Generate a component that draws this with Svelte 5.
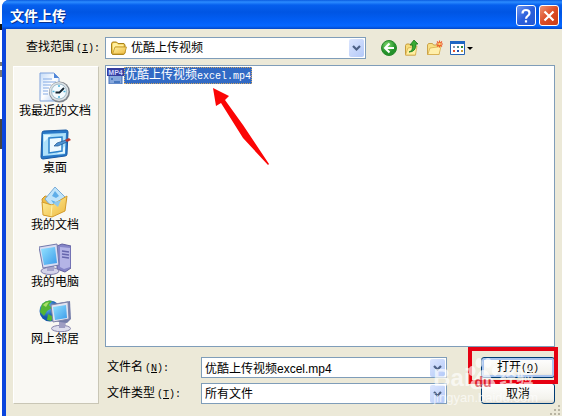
<script lang="ts">
	const folder = '优酷上传视频';
	const places = [
		{ id: 'recent', label: '我最近的文档' },
		{ id: 'desktop', label: '桌面' },
		{ id: 'documents', label: '我的文档' },
		{ id: 'computer', label: '我的电脑' },
		{ id: 'network', label: '网上邻居' }
	];

	let fileName = $state('优酷上传视频excel.mp4');
</script>

{#snippet chevron()}
	<svg class="chevron" viewBox="0 0 15 18" width="15" height="18" aria-hidden="true">
		<path d="M4 7l3.500 3.500L11 7" fill="none" stroke="#4d6185" stroke-width="2.200" />
	</svg>
{/snippet}

{#snippet placeIcon(id: string)}
	<svg viewBox="0 0 32 32" width="32" height="32" aria-hidden="true">
		{#if id === 'recent'}
			<path d="M1 1h14l5 5v23H1z" fill="url(#paper)" stroke="#7fa3dc" />
			<path d="M15 1v5h5z" fill="#4f86d8" />
			<path d="M4 7h9M4 10h13M4 13h8M4 16h6M4 19h5M4 22h5" stroke="#82a9e4" />
			<circle cx="20.500" cy="20" r="10.500" fill="#7f858c" />
			<circle cx="20" cy="19.500" r="9.500" fill="#dce1e4" />
			<circle cx="20" cy="19.500" r="7.500" fill="#f4fbff" stroke="#9fb9c8" />
			<path d="M20 13v2M20 24v2M13.500 19.500h2M24.500 19.500h2" stroke="#4ab0d8" stroke-width="1.500" />
			<path d="M16.500 20.500h4l4.500-4.500" fill="none" stroke="#14242f" stroke-width="1.800" />
		{:else if id === 'desktop'}
			<path d="M3 4q0-2 2-2l22-1q2 0 2 2l-1 22q0 2-2 2L4 30q-2 0-2-2z" fill="#2777c6" stroke="#1659a4" />
			<path d="M4 5l23-1-1 21-22 2z" fill="#aee1fa" />
			<path d="M5 6h7l-7 7zM26 17v7l-8 1z" fill="#e3f7ff" />
			<path d="M10 9l13-1v14l-13 2z" fill="#eefaff" stroke="#2d83cb" stroke-width="1.500" />
			<path d="M15 17l3-3 9-3 1 2-9 4z" fill="#4d93d4" stroke="#24588e" stroke-width=".7" />
			<path d="M26 11l4-2 2 2-4 2z" fill="#b8372e" />
		{:else if id === 'documents'}
			<path d="M3 13l3-3 5 1 5 6-3 13-8-1z" fill="#f0bd45" stroke="#c9932e" />
			<path d="M16 1l12 12-11 13L6 13z" fill="#bfe4fa" stroke="#79acd8" />
			<path d="M16 5l4 5-3 2-4-2zM12 14l5 2 5-2-5 7z" fill="#5eaee9" />
			<path d="M3 16l10 3 15-9-2 15-13 6-9-2z" fill="url(#folderFill)" stroke="#d39b2b" />
			<path d="M13 19l-1 11" stroke="#fff3ac" />
			<path d="M14 17l5 4 3-7z" fill="#8fc9ed" />
		{:else if id === 'computer'}
			<path d="M18 3l5-2 9 2v22l-6 4-8-3z" fill="#8585c8" stroke="#6260a0" />
			<path d="M21 4l10 1v19l-6 2-4-2z" fill="#b4b4e6" />
			<path d="M23 8l7 1M23 11l7 1M23 14l7 1" stroke="#6667ae" stroke-width="1.300" />
			<ellipse cx="11" cy="28" rx="9" ry="3.500" fill="#d4d3ea" stroke="#8280ad" />
			<path d="M8 22h7v6H8z" fill="#a6a5cc" />
			<path d="M0 4l18-3 2 21-16 3z" fill="#d7dcf2" stroke="#7378ab" />
			<path d="M2 6l14-2 2 16-13 2z" fill="url(#screen)" />
		{:else}
			<circle cx="11" cy="11" r="10.500" fill="url(#globe)" />
			<path d="M3 4q5-5 10-3l-3 4 3 3-5 3-3 5-4-4zM9 14l6 3-3 4-4-1z" fill="#53b535" />
			<path d="M4 5q3-3 6-3l-3 5z" fill="#abe06a" />
			<ellipse cx="22" cy="28.500" rx="9.500" ry="3.200" fill="#dedeed" stroke="#8582aa" />
			<path d="M20 21l7 1-1 6h-6z" fill="#9e9dc2" />
			<path d="M13 4l18-3 1 18-4 4-14-2z" fill="#747da9" />
			<path d="M12 5l17-3 1 17-16 3z" fill="#e2e4ef" stroke="#7e83a8" />
			<path d="M14 7l13-2 1 13-12 2z" fill="url(#screen)" />
		{/if}
	</svg>
{/snippet}

<svg class="defs" width="0" height="0" aria-hidden="true">
	<defs>
		<linearGradient id="paper" x2="1" y2="1">
			<stop stop-color="#c5dcf8" /><stop offset=".5" stop-color="#fff" /><stop offset="1" stop-color="#a9c8f2" />
		</linearGradient>
		<linearGradient id="folderFill" x2="1" y2="1">
			<stop stop-color="#fff3a4" /><stop offset="1" stop-color="#eeb83d" />
		</linearGradient>
		<linearGradient id="screen" x2="1" y2="1">
			<stop stop-color="#94e3ff" /><stop offset="1" stop-color="#3b9bea" />
		</linearGradient>
		<radialGradient id="globe" cx=".35" cy=".3">
			<stop stop-color="#72c8f8" /><stop offset="1" stop-color="#1455ad" />
		</radialGradient>
		<radialGradient id="green" cx=".4" cy=".3">
			<stop stop-color="#83dc70" /><stop offset="1" stop-color="#23912a" />
		</radialGradient>
	</defs>
</svg>

<div class="window" role="dialog" aria-labelledby="title">
	<header>
		<h1 id="title">文件上传</h1>
		<button class="caption help" aria-label="帮助">
			<svg viewBox="0 0 18 18" width="18" height="18" aria-hidden="true">
				<path d="M5.500 6.500q0-3.500 3.500-3.500t3.500 3q0 1.700-1.700 2.800T9 11.800M9 13.300v2.200" fill="none" stroke="#fff" stroke-width="2.200" />
			</svg>
		</button>
		<button class="caption close" aria-label="关闭">
			<svg viewBox="0 0 18 18" width="18" height="18" aria-hidden="true">
				<path d="M4.500 4.500l9 9M13.500 4.500l-9 9" stroke="#fff" stroke-width="2.200" />
			</svg>
		</button>
	</header>

	<div class="body">
		<div class="lookup">
			<label for="look-in">查找范围<span class="key">(<u>I</u>):</span></label>
			<div class="combo look">
				<svg class="folder" viewBox="0 0 16 16" width="16" height="16" aria-hidden="true">
					<path d="M.500 3.500l1-1.500h4l1.500 1.500h6l1 1.500v8l-1.500 1.500h-11L.500 13z" fill="#eec03f" stroke="#a7821e" />
					<path d="M1.500 4.500l1-1.500h3L7 4.500h5.500v2h-8l-2.500 6z" fill="#fff0a0" />
					<path d="M4 7h11.500l-2 7h-12z" fill="url(#folderFill)" stroke="#bd9122" stroke-width=".8" />
				</svg>
				<select id="look-in"><option>{folder}</option></select>
				{@render chevron()}
			</div>
			<div class="tools">
				<button aria-label="后退">
					<svg viewBox="0 0 16 16" width="16" height="16" aria-hidden="true">
						<circle cx="8" cy="8" r="7.500" fill="url(#green)" stroke="#29892d" />
						<path d="M8.500 3.500L4 8l4.500 4.500M4.500 8H13" fill="none" stroke="#fff" stroke-width="2" />
					</svg>
				</button>
				<button aria-label="向上一级">
					<svg viewBox="0 0 16 16" width="16" height="16" aria-hidden="true">
						<path d="M1.500 5.500l1-1.500h3l1 1h5v10h-10z" fill="#f7dd7c" stroke="#c69b3c" />
						<path d="M4 8l9-2-1.500 9h-10z" fill="#ffefa0" stroke="#d4a843" stroke-width=".7" />
						<path d="M5 12q4-1 3.500-7H6l4-5 4 4h-2q0 8-7 8z" fill="#38aa32" stroke="#197a20" stroke-width=".8" />
					</svg>
				</button>
				<button aria-label="新建文件夹">
					<svg viewBox="0 0 16 16" width="16" height="16" aria-hidden="true">
						<path d="M.500 5l1-1.500h4L6.500 5H12v9.500H.500z" fill="#f8df84" stroke="#cba34a" />
						<path d="M3 8l11-1.500-2 8H.800z" fill="#ffefaa" stroke="#d4a843" stroke-width=".7" />
						<path d="M12.500.500v7M9 4h7M10 1.500l5 5M15 1.500l-5 5" stroke="#ee5926" stroke-width="1.100" />
						<circle cx="12.500" cy="4" r="1.300" fill="#ffd36a" />
					</svg>
				</button>
				<button class="views" aria-label="查看菜单">
					<svg viewBox="0 0 23 16" width="23" height="16" aria-hidden="true">
						<path d="M.500 1.500h14v13H.500z" fill="#fff" stroke="#2463b4" />
						<path d="M0 1h15v3H0z" fill="#1d66c3" />
						<path d="M3 6h2v2H3z" fill="#8794b4" /><path d="M7 6h2v2H7z" fill="#4c8d8b" /><path d="M11 6h2v2h-2z" fill="#2e8b37" />
						<path d="M3 10h2v2H3z" fill="#e2512e" /><path d="M7 10h2v2H7z" fill="#214eaa" /><path d="M11 10h2v2h-2z" fill="#c79b35" />
						<path d="M17 7h6l-3 3z" fill="#000" />
					</svg>
				</button>
			</div>
		</div>

		<div class="main">
			<nav aria-label="位置">
				{#each places as place (place.id)}
					<button class="place">
						{@render placeIcon(place.id)}
						<span>{place.label}</span>
					</button>
				{/each}
			</nav>

			<div class="content">
				<div class="files">
					<button class="file">
						<svg viewBox="0 0 17 16" width="17" height="16" aria-hidden="true">
							<path d="M2 7h13v9H2z" fill="#85a7dc" stroke="#426fb8" />
							<path d="M4 10h2v2H4zM7 13h6v2H7z" fill="#4777be" />
							<path d="M0 0h17v8H0z" fill="#353d9e" />
							<text x="8.500" y="7" text-anchor="middle">MP4</text>
						</svg>
						<span class="name">{folder}<span class="latin">excel.mp4</span></span>
					</button>
					<svg class="pointer" viewBox="0 0 57 80" width="57" height="80" aria-hidden="true">
						<path d="M0 0l16 8-4 4 18 25 26 39-1 1L30 50 8 15l-5 3z" fill="#fb0505" />
					</svg>
				</div>

				<div class="fields">
					<label for="file-name">文件名<span class="key">(<u>N</u>):</span></label>
					<div class="combo">
						<input id="file-name" type="text" bind:value={fileName} />
						{@render chevron()}
					</div>
					<div class="marked">
						<button class="action primary">打开<span class="key">(<u>O</u>)</span></button>
					</div>

					<label for="file-type">文件类型<span class="key">(<u>T</u>):</span></label>
					<div class="combo">
						<select id="file-type"><option>所有文件</option></select>
						{@render chevron()}
					</div>
					<button class="action">取消</button>
				</div>
			</div>
		</div>
	</div>

	<svg class="grip" viewBox="0 0 12 12" width="12" height="12" aria-hidden="true">
		<path d="M9 1h2v2H9zM5 5h2v2H5zM9 5h2v2H9zM1 9h2v2H1zM5 9h2v2H5zM9 9h2v2H9z" fill="#b8b4a2" />
	</svg>

	<div class="watermark" aria-hidden="true">
		<div class="brand">
			<span>Bai</span>
			<svg viewBox="0 0 30 34" width="30" height="34">
				<ellipse cx="4" cy="14" rx="3.500" ry="5" />
				<ellipse cx="11" cy="6" rx="3.500" ry="5" />
				<ellipse cx="20" cy="6" rx="3.500" ry="5" />
				<ellipse cx="27" cy="14" rx="3" ry="5" />
				<path d="M15 13q4 0 6 4t5 7q3 4 0 7-2 2-6 1-5-1-10 0-5 1-7-2-2-4 2-7 3-2 5-6t5-4z" />
				<text x="15" y="30" text-anchor="middle">du</text>
			</svg>
			<span class="cjk">经验</span>
		</div>
		<div class="site">jingyan.baidu.com</div>
	</div>
</div>

<style>
	:global(body) {
		margin: 0;
		/* page behind the dialog, seen only as a sliver on the left */
		background: linear-gradient(
			#fff 24px, #111 24px, #111 30px, #fff 30px, #fff 62px, #777 62px, #777 66px,
			#fff 66px, #fff 70px, #777 70px, #777 77px, #fff 77px, #fff 119px,
			#444 119px, #444 149px, #fff 149px
		) no-repeat;
	}
	.window {
		position: relative;
		display: flex;
		flex-direction: column;
		box-sizing: border-box;
		min-height: 100vh;
		margin-left: 2px;
		border-left: 4px solid #0a45dd;
		border-top-left-radius: 7px;
		background: #ece9d8;
		color: #000;
		font: 12px/14px 'Liberation Sans', 'Noto Sans CJK SC', sans-serif;
	}
	button,
	input,
	select {
		font: inherit;
		color: inherit;
	}
	button {
		margin: 0;
		padding: 0;
		border: 0;
		background: none;
	}
	.defs {
		position: absolute;
	}
	header {
		display: flex;
		align-items: center;
		gap: 3px;
		box-sizing: border-box;
		height: 29px;
		margin-left: -4px;
		padding: 2px 3px 0 8px;
		border-top-left-radius: 7px;
		background: linear-gradient(#0a5be0, #2c8cff 2px, #0660ee 5px, #0055e3 12px, #0260f8 22px, #0667ff 26px, #0347c8);
	}
	h1 {
		flex: 1;
		margin: 0;
		color: #fff;
		font-size: 14px;
		line-height: 20px;
		text-shadow: 1px 1px #0a318c;
	}
	.caption {
		display: grid;
		place-items: center;
		box-sizing: border-box;
		width: 20px;
		height: 21px;
		border: 1px solid #fff;
		border-radius: 3px;
	}
	.help {
		background: linear-gradient(135deg, #6d95ef, #2a5fdc 50%, #2458d2);
	}
	.close {
		background: linear-gradient(135deg, #ee9273, #dc4c26 50%, #cb3c14);
	}
	.body {
		display: flex;
		flex: 1;
		flex-direction: column;
		gap: 6px;
		padding: 8px 7px 12px;
	}
	.lookup {
		display: flex;
		align-items: center;
	}
	.lookup label {
		width: 79px;
		padding-left: 13px;
	}
	.key,
	.latin {
		font-family: 'Liberation Mono', monospace;
		font-size: 10px;
	}
	.combo {
		display: flex;
		align-items: center;
		position: relative;
		box-sizing: border-box;
		height: 21px;
		border: 1px solid #7f9db9;
		background: #fff;
	}
	.look {
		flex: 0 1 261px;
		height: 22px;
		padding-left: 5px;
	}
	.combo input,
	.combo select {
		flex: 1;
		min-width: 0;
		height: 100%;
		margin: 0;
		padding: 0 17px 0 3px;
		border: 0;
		outline: 0;
		background: none;
		appearance: none;
	}
	.look select {
		padding-left: 4px;
	}
	.chevron {
		position: absolute;
		right: 1px;
		border-radius: 2px;
		background: linear-gradient(135deg, #dce6fe, #b4c9f8);
		pointer-events: none;
	}
	.tools {
		display: flex;
		gap: 7px;
		margin-left: 15px;
	}
	.tools button,
	.tools svg {
		display: block;
	}
	.main {
		display: flex;
		flex: 1;
		gap: 6px;
	}
	nav {
		display: flex;
		flex: 0 0 84px;
		flex-direction: column;
		gap: 11px;
		margin-top: 1px;
		padding-top: 5px;
		border: 1px solid;
		border-color: #fff #c9c6b5 #c9c6b5 #fff;
		background: #f9f8f3;
	}
	.place {
		display: flex;
		flex-direction: column;
		align-items: center;
		padding-right: 2px;
		white-space: nowrap;
	}
	.content {
		display: flex;
		flex: 1;
		flex-direction: column;
		gap: 10px;
		min-width: 0;
	}
	.files {
		position: relative;
		flex: 1;
		border: 1px solid #7f9db9;
		background: #fff;
	}
	.file {
		display: flex;
		align-items: center;
		padding: 1px 0 0 1px;
	}
	.file text {
		fill: #cfd6ff;
		font: bold 7px 'Liberation Sans', sans-serif;
	}
	.name {
		height: 15px;
		border: 1px dotted #cfa663;
		background: #316ac5;
		color: #fff;
		white-space: nowrap;
	}
	.pointer {
		position: absolute;
		top: 22px;
		left: 107px;
	}
	.fields {
		display: grid;
		grid-template-columns: 94px 1fr 74px;
		row-gap: 5px;
		align-items: center;
	}
	.fields label {
		padding-left: 2px;
	}
	.key {
		margin-left: 2px;
	}
	.action .key {
		margin-left: 0;
	}
	.fields .combo {
		margin: 0 34px 0 2px;
	}
	.marked {
		position: relative;
	}
	.marked::after {
		position: absolute;
		inset: -10px -3px -6px -13px;
		border: 4px solid #e60012;
		content: '';
		pointer-events: none;
	}
	.action {
		display: block;
		box-sizing: border-box;
		width: 100%;
		height: 21px;
		border: 1px solid #003c74;
		border-radius: 3px;
		background: linear-gradient(#fff, #f3f2ec 80%, #dcd8ce);
	}
	.primary {
		box-shadow: inset 0 0 0 2px #a9c4ef;
	}
	.grip {
		position: absolute;
		right: 1px;
		bottom: 0;
	}
	.watermark {
		position: absolute;
		right: 24px;
		bottom: 11px;
		color: #fff;
		opacity: 0.65;
		pointer-events: none;
	}
	.brand {
		display: flex;
		align-items: flex-end;
		height: 34px;
		font-size: 24px;
		font-weight: bold;
		line-height: 26px;
	}
	.brand svg {
		margin-left: -3px;
		fill: #fff;
	}
	.brand text {
		fill: #d8323c;
		font: bold 14px 'Liberation Sans', sans-serif;
	}
	.cjk {
		margin-left: 2px;
		font-size: 17px;
	}
	.site {
		font-size: 13px;
	}
</style>
